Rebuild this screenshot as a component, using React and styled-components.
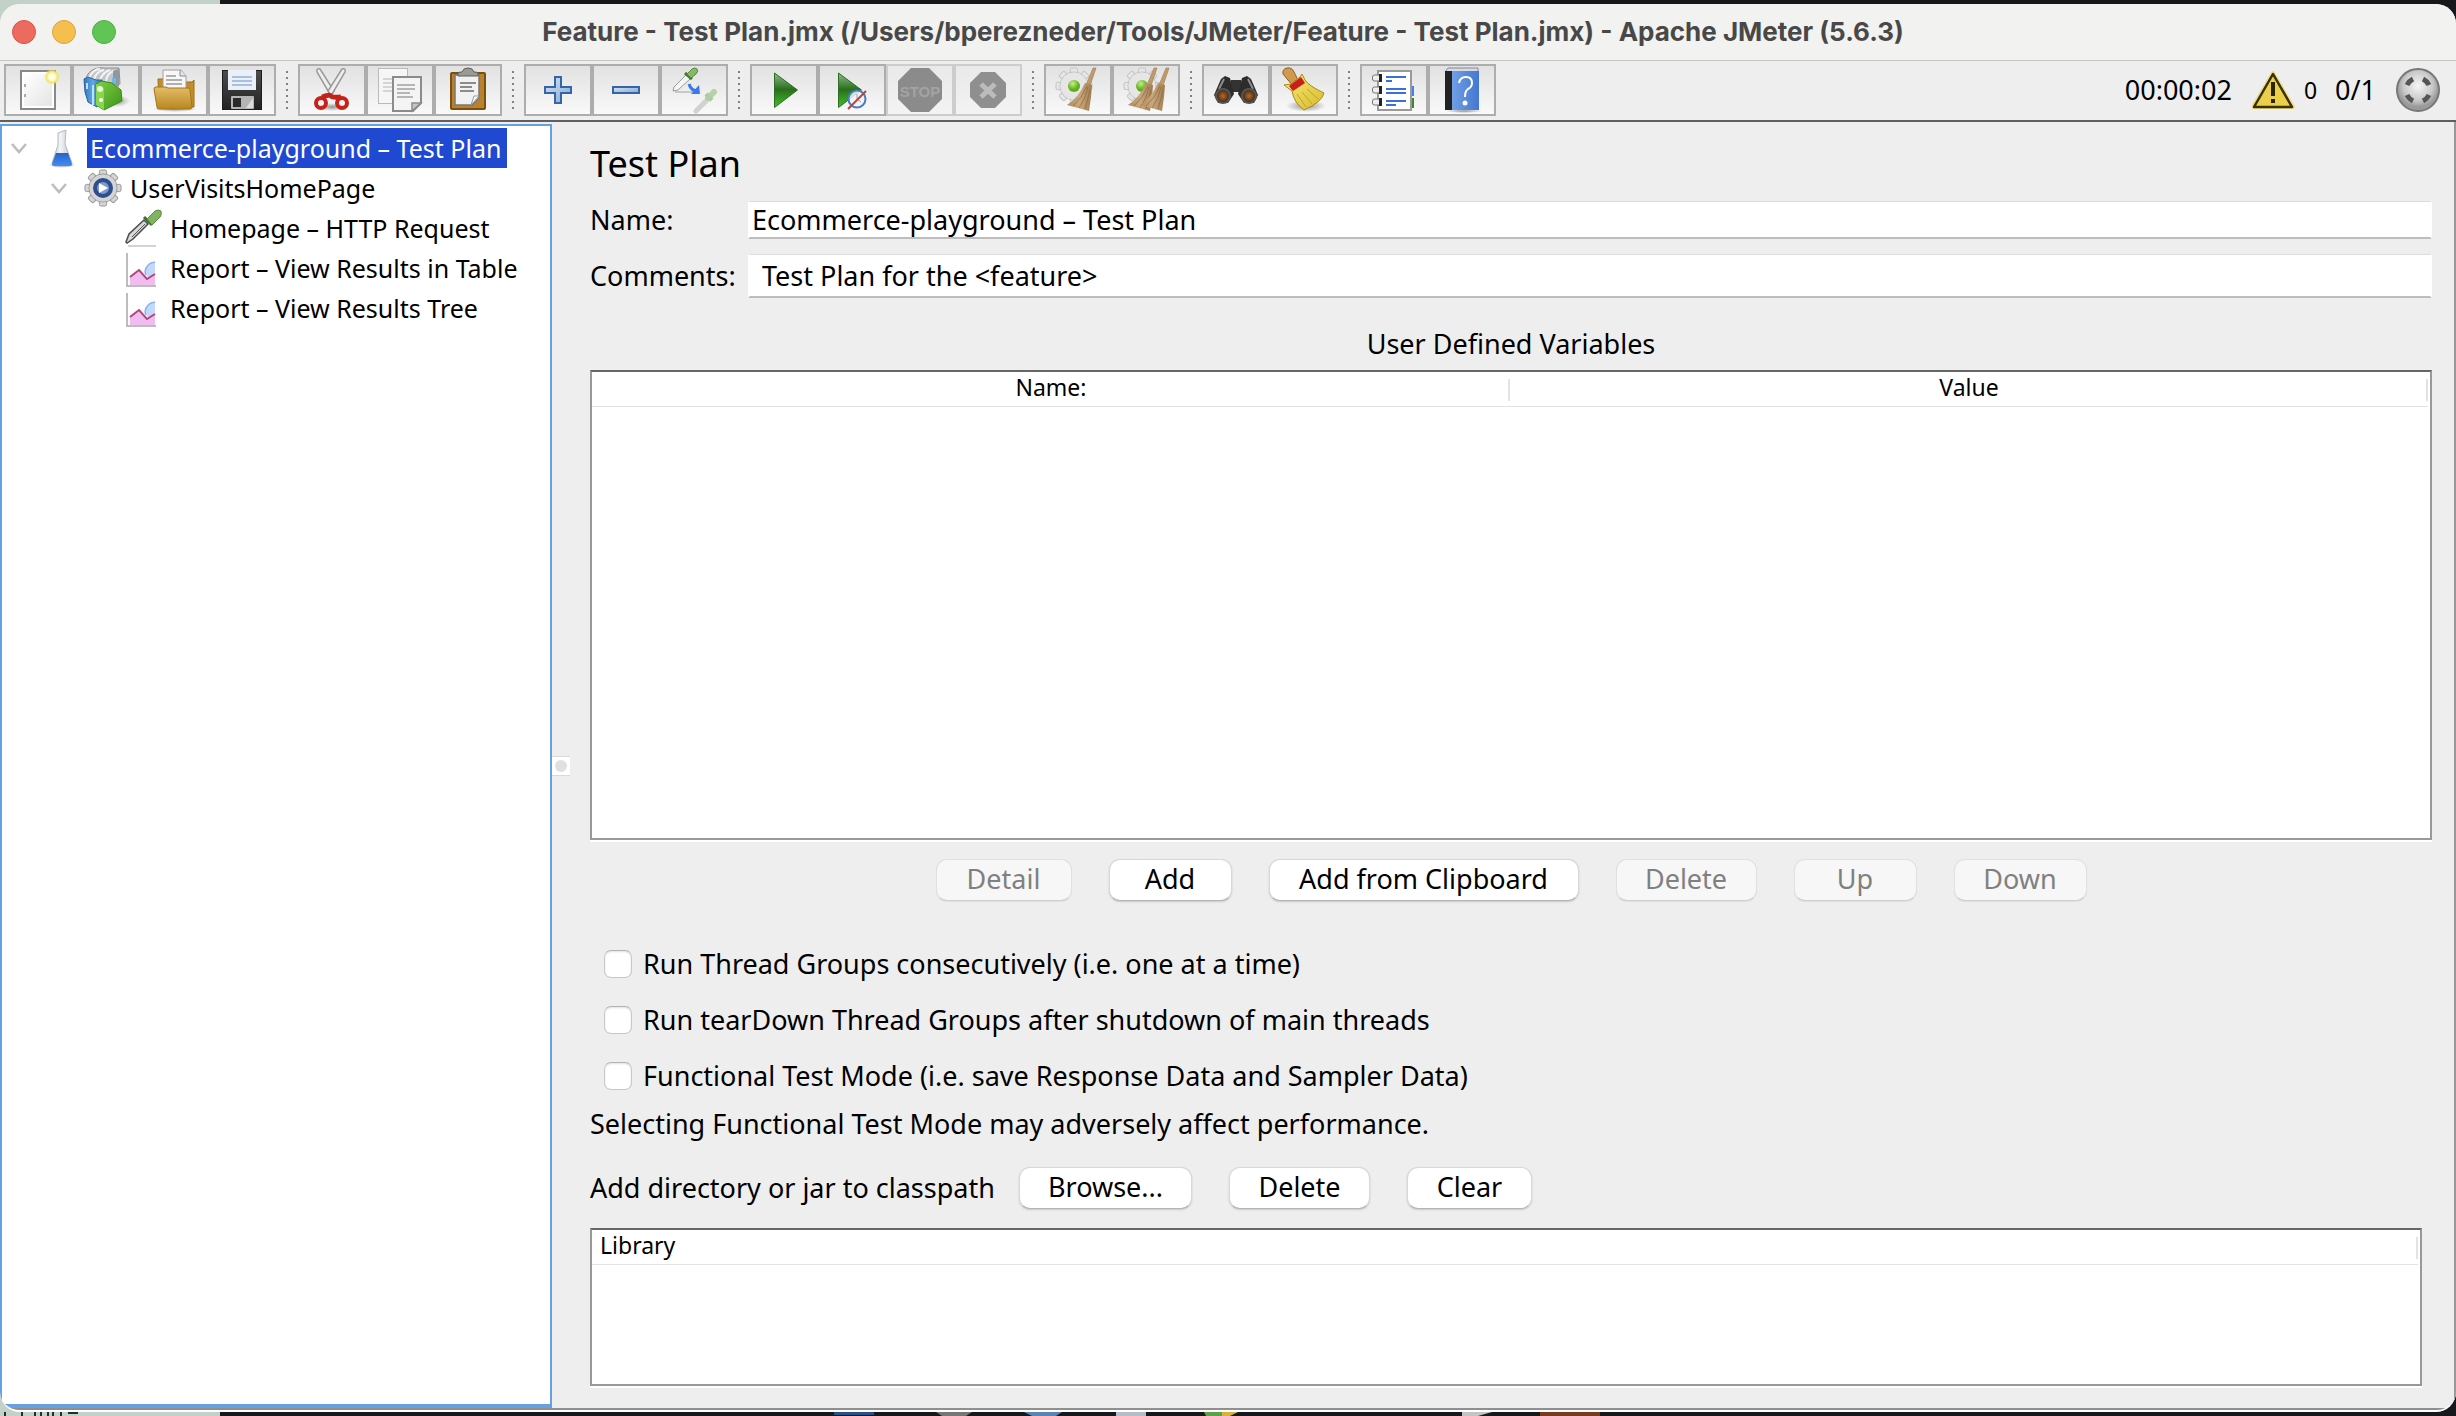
import React, { useState } from "react";
import styled, { createGlobalStyle, css } from "styled-components";

const UI_FONT = `"Noto Sans", "Open Sans", sans-serif`;

const GlobalStyle = createGlobalStyle`
  *, *::before, *::after { box-sizing: border-box; }
  body {
    margin: 0;
    color: #000;
    font: 27px/40px ${UI_FONT};
  }
  button, input { font: inherit; color: inherit; }
`;

/* ---------- desktop and window ---------- */

const Desktop = styled.div`
  display: flex;
  flex-direction: column;
  min-height: 100vh;
  padding-top: 4px;
  background: linear-gradient(90deg, #c3d2c8 220px, #17181b 220px);
`;

const DockStrip = styled.svg`
  display: block;
  width: 100%;
  height: 4px;
`;

const Window = styled.div`
  flex: 1;
  display: flex;
  flex-direction: column;
  overflow: hidden;
  border-radius: 20px;
  border-bottom: 2px solid #fff;
  background: #eee;
`;

const TitleBar = styled.header`
  display: grid;
  grid-template-columns: 140px 1fr 150px;
  align-items: center;
  height: 57px;
  padding: 0 12px;
  border-bottom: 1px solid #c4c4c4;
  background: #f2f2f0;
`;

const Lights = styled.div`
  display: flex;
  gap: 16px;
`;

const Light = styled.button`
  width: 24px;
  height: 24px;
  padding: 0;
  border: 1px solid ${(p) => p.$edge};
  border-radius: 50%;
  background: ${(p) => p.$fill};
`;

const Title = styled.h1`
  margin: 0;
  color: #484848;
  font: 700 26px/32px Inter, "Liberation Sans", sans-serif;
  text-align: center;
`;

/* ---------- toolbar ---------- */

const Toolbar = styled.div`
  display: flex;
  align-items: center;
  padding: 3px 16px 4px 4px;
  border-bottom: 2px solid #5f5f5f;
`;

const ToolGroup = styled.div`
  display: flex;
`;

const ToolButton = styled.button`
  display: block;
  width: 68px;
  height: 52px;
  padding: 0;
  border: 2px solid #adadad;
  background: linear-gradient(#e1e1e1, #f9f9f9);
  &:disabled {
    border-color: #cdcdcd;
    background: linear-gradient(#e9e9e9, #f3f3f3);
  }
  svg { display: block; width: 64px; height: 48px; }
`;

const Grip = styled.div`
  width: 2px;
  height: 38px;
  margin: 0 10px;
  background: repeating-linear-gradient(#808080 0 2px, transparent 2px 6px);
`;

const Status = styled.div`
  display: flex;
  align-items: center;
  margin-left: auto;
  svg { display: block; width: 44px; height: 44px; }
`;

const StatusText = styled.span`
  margin-left: ${(p) => (p.$small ? 8 : 0)}px;
  margin-right: ${(p) => (p.$small ? 18 : 20)}px;
  font-size: ${(p) => (p.$small ? 23 : 27)}px;
`;

/* ---------- body ---------- */

const Body = styled.div`
  flex: 1;
  display: grid;
  grid-template-columns: 552px 38px 1fr;
  padding-top: 2px;
  border-right: 2px solid #989898;
  border-bottom: 2px solid #8f8f8f;
`;

const TreePane = styled.nav`
  padding-top: 2px;
  border: 2px solid #68a1e1;
  border-bottom-width: 4px;
  background: #fff;
`;

const TreeList = styled.ul`
  margin: 0;
  padding: 0;
  list-style: none;
  font-size: 25px;
`;

const TreeRow = styled.li`
  display: flex;
  align-items: center;
  height: 40px;
  padding-left: ${(p) => p.$level * 40}px;
  svg { display: block; }
`;

const ToggleSlot = styled.span`
  width: 42px;
  padding-left: 8px;
`;

const TreeIcon = styled.span`
  width: 43px;
`;

const TreeLabel = styled.span`
  padding: 0 6px 0 3px;
  white-space: nowrap;
  ${(p) =>
    p.$selected &&
    css`
      color: #fff;
      background: #2049d2;
    `}
`;

const Splitter = styled.div`
  display: flex;
  align-items: center;
`;

const SplitHandle = styled.span`
  display: grid;
  place-items: center;
  width: 18px;
  height: 20px;
  border: 1px solid #d9d9d9;
  border-width: 1px 0;
  background: #fff;
  &::after {
    content: "";
    width: 12px;
    height: 12px;
    border-radius: 50%;
    background: #e0e0e0;
  }
`;

const Editor = styled.main`
  display: flex;
  flex-direction: column;
  padding: 16px 22px 20px 0;
`;

const Heading = styled.h2`
  margin: 0 0 12px;
  font-size: 36px;
  font-weight: 400;
  line-height: 48px;
`;

const Form = styled.div`
  display: grid;
  grid-template-columns: 158px 1fr;
  row-gap: 14px;
  align-items: center;
`;

const TextField = styled.input`
  width: 100%;
  height: ${(p) => (p.$roomy ? 44 : 38)}px;
  padding: 0 ${(p) => (p.$roomy ? 12 : 2)}px;
  border: 2px solid #fff;
  border-top: 1px solid #dcdcdc;
  border-bottom: 2px solid #bdbdbd;
  border-radius: 0;
  outline: 0;
  background: #fff;
`;

const TableCaption = styled.h3`
  margin: 26px 0 6px;
  font-size: 27px;
  font-weight: 400;
  text-align: center;
`;

const TableFrame = styled.div`
  height: ${(p) => p.$height}px;
  margin-right: ${(p) => p.$inset || 0}px;
  padding-right: 2px;
  border: 2px solid #999;
  border-top-color: #666;
  background: #fff;
  box-shadow: 0 2px #fff;
`;

const Table = styled.table`
  width: 100%;
  table-layout: fixed;
  border-collapse: collapse;
  th {
    height: 34px;
    padding: 0 8px 3px;
    border-bottom: 1px solid #e3e3e3;
    font-size: 23px;
    font-weight: 400;
    line-height: 30px;
    text-align: ${(p) => p.$align};
    background: linear-gradient(#e3e3e3, #e3e3e3) right 7px / 2px 22px no-repeat;
  }
  th:first-child { width: calc(50% + 2px); }
`;

const ButtonRow = styled.div`
  display: flex;
  justify-content: center;
  gap: 37px;
  margin-top: 19px;
`;

const PushButton = styled.button`
  min-width: ${(p) => p.$width}px;
  height: 42px;
  padding: 0 12px 2px;
  border: 1px solid #d8d8d8;
  border-bottom-color: #b4b4b4;
  border-radius: 11px;
  background: #fff;
  box-shadow: 0 1px 2px rgba(0, 0, 0, 0.16);
  line-height: 36px;
  white-space: nowrap;
  &:disabled {
    color: #808080;
    border-color: #e0e0e0;
    border-bottom-color: #cfcfcf;
    background: #f7f7f7;
    box-shadow: 0 1px 1px rgba(0, 0, 0, 0.06);
  }
`;

const Options = styled.div`
  display: grid;
  gap: 16px;
  margin-top: 43px;
  padding-left: 14px;
`;

const Option = styled.label`
  display: flex;
  align-items: center;
  gap: 11px;
`;

const Tick = styled.input`
  appearance: none;
  width: 28px;
  height: 28px;
  margin: 0;
  border: 1px solid #c8c8c8;
  border-top-color: #b4b4b4;
  border-radius: 7px;
  background: #fff;
  box-shadow: inset 0 1px 2px rgba(0, 0, 0, 0.12);
  &:checked { background: #2f7bf6; }
`;

const Note = styled.p`
  margin: 8px 0 0;
`;

const ClassPath = styled.div`
  display: flex;
  align-items: center;
  gap: 37px;
  margin: 23px 0 19px;
`;

const ClassPathLabel = styled.span`
  width: 392px;
  white-space: nowrap;
`;

/* ---------- icons ---------- */

const Svg = ({ children, w = 64, h = 48, ...rest }) => (
  <svg viewBox={`0 0 ${w} ${h}`} width={w} height={h} aria-hidden="true" {...rest}>
    {children}
  </svg>
);

const GradientSheet = styled.svg`
  position: absolute;
  width: 0;
  height: 0;
`;

const Gradients = () => (
  <GradientSheet aria-hidden="true">
    <defs>
      <linearGradient id="gold" x2="0" y2="1"><stop stopColor="#e3bd6a" /><stop offset="1" stopColor="#b98720" /></linearGradient>
      <linearGradient id="blue" x2="1" y2="0"><stop stopColor="#2f78c4" /><stop offset=".5" stopColor="#63a8e0" /><stop offset="1" stopColor="#2d6fb0" /></linearGradient>
      <linearGradient id="green" x2="1" y2="1"><stop stopColor="#7fd04a" /><stop offset="1" stopColor="#3e9416" /></linearGradient>
      <linearGradient id="play" x2="0" y2="1"><stop stopColor="#8cba88" /><stop offset=".48" stopColor="#2a6e1e" /><stop offset="1" stopColor="#3fc426" /></linearGradient>
      <linearGradient id="paper" x2="1" y2="1"><stop stopColor="#fff" /><stop offset="1" stopColor="#dedede" /></linearGradient>
      <linearGradient id="dark" x2="0" y2="1"><stop stopColor="#4c4c4c" /><stop offset="1" stopColor="#222" /></linearGradient>
      <linearGradient id="plusFill" x2="1" y2="1"><stop stopColor="#d5e2f2" /><stop offset="1" stopColor="#84a9d8" /></linearGradient>
      <linearGradient id="straw" x2="1" y2="0"><stop stopColor="#b18a5c" /><stop offset=".5" stopColor="#c9a77c" /><stop offset="1" stopColor="#a27c50" /></linearGradient>
      <linearGradient id="yellow" x2="1" y2="1"><stop stopColor="#f8ec78" /><stop offset="1" stopColor="#d8b92c" /></linearGradient>
      <linearGradient id="cover" x2="1" y2="0"><stop stopColor="#6f9fe6" /><stop offset="1" stopColor="#4478cf" /></linearGradient>
      <radialGradient id="glow"><stop stopColor="#fff" /><stop offset=".4" stopColor="#fffbd0" /><stop offset=".7" stopColor="#f2e56b" /><stop offset="1" stopColor="#f2e56b" stopOpacity="0" /></radialGradient>
      <radialGradient id="shadow"><stop stopColor="#000" stopOpacity=".4" /><stop offset="1" stopColor="#000" stopOpacity="0" /></radialGradient>
      <radialGradient id="lens"><stop stopColor="#b06a30" /><stop offset="1" stopColor="#3f220f" /></radialGradient>
      <radialGradient id="dot" cx=".4" cy=".3"><stop stopColor="#c6f08a" /><stop offset="1" stopColor="#5fae1a" /></radialGradient>
      <radialGradient id="ball" cx=".5" cy=".4"><stop stopColor="#f6f6f6" /><stop offset=".7" stopColor="#c8c8c8" /><stop offset="1" stopColor="#9a9a9a" /></radialGradient>
      <linearGradient id="liquid" x2="0" y2="1"><stop stopColor="#2b62c4" /><stop offset="1" stopColor="#3f8df5" /></linearGradient>
      <linearGradient id="glass" x2="1" y2="0"><stop stopColor="#b4bac2" /><stop offset=".4" stopColor="#f4f6f8" /><stop offset="1" stopColor="#b9bfc7" /></linearGradient>
    </defs>
  </GradientSheet>
);

const NewIcon = () => (
  <Svg>
    <rect x="15" y="5" width="34" height="38" fill="#fff" stroke="#888a85" strokeWidth="2" />
    <rect x="18" y="8" width="28" height="32" fill="url(#paper)" opacity=".8" />
    <path d="M19 18v3M19 28v3" stroke="#aaa" strokeWidth="2" />
    <circle cx="46" cy="11" r="8" fill="url(#glow)" />
  </Svg>
);

const TemplatesIcon = () => (
  <Svg>
    <ellipse cx="42" cy="35" rx="14" ry="6" fill="url(#shadow)" />
    <path d="M12 12C15 3 24 1 30 2h15l1 16-32 4z" fill="#c3c6ca" stroke="#8b9096" />
    <path d="M15 12q4-9 11-9M20 13q3-8 10-9M26 14q3-8 10-10M32 15q1-8 8-10" stroke="#f4f4f4" strokeWidth="2" fill="none" />
    <path d="M39 5l6-2v18l-6-3z" fill="#90989f" />
    <path d="M38 12h4v6h-4z" fill="#6fb8e8" />
    <path d="M10 13l4-2 8 3h6v10l-5 17-9-5-3-10z" fill="url(#blue)" stroke="#27639f" />
    <path d="M13 17v6M19 19v20" stroke="#bfe0fa" strokeWidth="2" />
    <path d="M22 18l5-3 11 2 9 7 1 11-18 9-8-5z" fill="url(#green)" stroke="#3a8a18" />
    <path d="M22 18l8 4v22l-8-5z" fill="#86d74c" />
    <circle cx="26" cy="23" r="3" fill="#e9fbd2" />
    <circle cx="27" cy="34" r="2" fill="#fff" />
  </Svg>
);

const OpenIcon = () => (
  <Svg>
    <ellipse cx="33" cy="43" rx="22" ry="3" fill="url(#shadow)" />
    <path d="M16 13h8l2 3h24l2-2v27H17z" fill="#c48d25" stroke="#9b6d17" />
    <path d="M21 4h18l5 6v14H21z" fill="#f7f7f7" stroke="#a0a0a0" />
    <path d="M38 4v6h6" fill="#dfe8e8" stroke="#889" />
    <path d="M24 10h10M24 14h16M24 18h16" stroke="#b0b0b0" strokeWidth="2" />
    <path d="M12 23q0-2 2-2h10l2 1h20q2 0 2 2l2 17q0 2-2 2H17q-2 0-2-2z" fill="url(#gold)" stroke="#a3741b" />
  </Svg>
);

const SaveIcon = () => (
  <Svg>
    <rect x="12.5" y="4.5" width="39" height="39" fill="url(#dark)" stroke="#1d1d1d" />
    <rect x="18" y="4" width="28" height="20" fill="#e9f0f8" />
    <path d="M22 11h20M22 15h20M22 19h20" stroke="#a9bfdc" strokeWidth="2" />
    <rect x="21" y="30" width="23" height="13" rx="1" fill="#b4b4b4" />
    <rect x="23" y="32" width="8" height="9" fill="#2a2a2a" />
    <path d="M36 42l7-10v10z" fill="#dcdcdc" />
  </Svg>
);

const CutIcon = () => (
  <Svg>
    <ellipse cx="32" cy="41" rx="14" ry="4" fill="url(#shadow)" />
    <path d="M17 6q-1-4 3-3l14 22-3 5z" fill="#eee" stroke="#999" strokeWidth="1.5" />
    <path d="M45 6q1-4-3-3L28 25l3 5z" fill="#eee" stroke="#999" strokeWidth="1.5" />
    <g fill="none" stroke="#c4231c" strokeWidth="4">
      <ellipse cx="21" cy="37" rx="5" ry="5" /><ellipse cx="42" cy="37" rx="5" ry="5" />
      <path d="M22 31q8-3 9-1t10 1" strokeWidth="5" />
    </g>
  </Svg>
);

const CopyIcon = () => (
  <Svg>
    <rect x="10.5" y="2.5" width="29" height="35" fill="#f6f6f6" stroke="#b9b9b9" />
    <path d="M15 13h16M15 17h10M15 21h10M15 25h10" stroke="#d5d5d5" strokeWidth="2" />
    <path d="M25 11h28v26l-8 8H25z" fill="#f4f4f4" stroke="#8b8b8b" strokeWidth="2" />
    <path d="M29 19h18M29 23h18M29 27h13M29 31h16" stroke="#b5b5b5" strokeWidth="2" />
    <path d="M53 37h-9v8z" fill="#c6c6c6" stroke="#8b8b8b" strokeWidth="1.5" />
  </Svg>
);

const PasteIcon = () => (
  <Svg>
    <rect x="15" y="7" width="34" height="36" rx="1" fill="#b9822f" stroke="#7a4f10" strokeWidth="2" />
    <path d="M19 9h24v23l-7 7H19z" fill="#f1f1f1" stroke="#777" strokeWidth="1.5" />
    <path d="M24 17h16M24 21h12M24 25h14" stroke="#8b8b8b" strokeWidth="2" />
    <path d="M43 30h-5l-3 9z" fill="#fff" stroke="#999" />
    <path d="M22 10V7q0-1 4-1 1-4 6-4t6 4q4 0 4 1v3z" fill="#9a9c94" stroke="#5d5e59" />
  </Svg>
);

const PlusIcon = () => (
  <Svg>
    <path d="M29 11h6v10h10v6H35v10h-6V27H19v-6h10z" fill="url(#plusFill)" stroke="#3465a4" strokeWidth="2" />
  </Svg>
);

const MinusIcon = () => (
  <Svg>
    <rect x="19" y="21" width="26" height="6" fill="url(#plusFill)" stroke="#3465a4" strokeWidth="2" />
  </Svg>
);

const Dropper = () => (
  <g>
    <path d="M11 25l1-4L24 9l4 4-12 11z" fill="#f6f6f6" stroke="#9a9a9a" />
    <path d="M23 7l7 6" stroke="#467a30" strokeWidth="3" />
    <path d="M25 8l5-5q3-2 5 0t-1 5l-5 4z" fill="#86b96a" stroke="#568a3c" />
  </g>
);

const ToggleIcon = () => (
  <Svg>
    <path d="M13 26h18" stroke="#bbb" strokeWidth="1.5" />
    <Dropper />
    <path d="M27 18q2 7 9 7" fill="none" stroke="#3a78ee" strokeWidth="3" />
    <path d="M37 19l1 9-9 0z" fill="#3a78ee" />
    <path d="M34 45L46 33" stroke="#d2d2d2" strokeWidth="5" strokeLinecap="round" />
    <path d="M44 28l6 6" stroke="#9dba8f" strokeWidth="4" opacity=".8" />
    <path d="M46 32l6-6" stroke="#b0cf9f" strokeWidth="6" strokeLinecap="round" opacity=".9" />
  </Svg>
);

const PlayIcon = () => (
  <Svg><path d="M22.5 7l23 17-23 17.500z" fill="url(#play)" stroke="#2c6e22" /></Svg>
);

const PlayNoTimersIcon = () => (
  <Svg>
    <path d="M18.5 7l23 17-23 17.500z" fill="url(#play)" stroke="#2c6e22" />
    <circle cx="37" cy="33" r="8.5" fill="#eef3fa" fillOpacity=".85" stroke="#4a7dbd" strokeWidth="2" />
    <path d="M37 28v5l4 3" stroke="#9aa" fill="none" />
    <path d="M28 43L46 25" stroke="#d0392f" strokeWidth="2" />
  </Svg>
);

const StopIcon = () => (
  <Svg>
    <path d="M23 2h18l13 13v18L41 46H23L10 33V15z" fill="#8b8b8b" />
    <text x="32" y="31" textAnchor="middle" fontSize="15" fontWeight="700" fontFamily="Liberation Sans, sans-serif" fill="#a3a3a3">STOP</text>
  </Svg>
);

const ShutdownIcon = () => (
  <Svg>
    <path d="M25 6h14l11 11v14L39 42H25L14 31V17z" fill="#8f8f8f" />
    <path d="M25 18l14 13M39 18L25 31" stroke="#bcbcbc" strokeWidth="5" />
  </Svg>
);

const Cog = ({ cx, cy, r, fill = "#e6e6e6", stroke = "#c4c4c4" }) => (
  <g transform={`translate(${cx} ${cy})`} fill={fill} stroke={stroke}>
    {[0, 45, 90, 135].map((a) => (
      <rect key={a} x={-r * 0.2} y={-r} width={r * 0.4} height={r * 2} rx="1.5" transform={`rotate(${a})`} />
    ))}
    <circle r={r * 0.78} />
    <circle r={r * 0.74} stroke="none" />
  </g>
);

const Whisk = () => (
  <g>
    <path d="M47 2l3 0-6 18-4-1z" fill="#c09a6d" stroke="#a07c50" strokeWidth=".6" />
    <path d="M39 17l7 2-1 12-2 14-22-6q12-8 18-22z" fill="url(#straw)" />
    <path d="M27 40q9-8 14-20M33 42q7-10 9-21M39 43q3-10 5-20" stroke="#8a6a44" fill="none" strokeWidth=".7" />
  </g>
);

const ClearIcon = () => (
  <Svg>
    <Cog cx={28} cy={20} r={18} />
    <circle cx="28" cy="20" r="6" fill="url(#dot)" />
    <Whisk />
  </Svg>
);

const ClearAllIcon = () => (
  <Svg>
    <Cog cx={28} cy={20} r={18} />
    <circle cx="28" cy="20" r="6" fill="url(#dot)" />
    <g transform="translate(-7 0)"><Whisk /></g>
    <g transform="translate(5 0)"><Whisk /></g>
  </Svg>
);

const SearchIcon = () => (
  <Svg>
    <path d="M27 14h10v12H27z" fill="#333" />
    <path d="M17 13l4-3 5 2 4 16-6 9H14l-4-8z" fill="#2c2c2c" />
    <path d="M47 13l-4-3-5 2-4 16 6 9h10l4-8z" fill="#2c2c2c" />
    <path d="M20 13l-5 10M44 13l5 10" stroke="#8c8c8c" strokeWidth="2" />
    <circle cx="19" cy="30" r="7" fill="url(#lens)" stroke="#555" strokeWidth="2" />
    <circle cx="45" cy="30" r="7" fill="url(#lens)" stroke="#555" strokeWidth="2" />
  </Svg>
);

const BroomIcon = () => (
  <Svg>
    <ellipse cx="34" cy="40" rx="20" ry="6" fill="url(#shadow)" />
    <path d="M11 8q-1-5 4-6 5-1 7 4l5 10-6 4z" fill="#cf9a4e" stroke="#8f6220" />
    <path d="M12 19l7-1 9-7 2-3 3 6q4 6 19 13-2 9-20 17Q22 37 20 25z" fill="url(#yellow)" stroke="#a58a1a" />
    <path d="M17 20l12-9 4 6-12 8z" fill="#c9201c" />
    <path d="M25 28l9 13M30 26l10 12M35 23l11 10" stroke="#c4a526" />
  </Svg>
);

const ListIcon = () => (
  <Svg>
    <path d="M49 20h3v10h-3z" fill="#4a7fe8" />
    <path d="M49 32h3v10h-3z" fill="#3c8a1c" />
    <rect x="16" y="5" width="33" height="39" fill="#fff" stroke="#9a9a9a" strokeWidth="2" />
    <path d="M24 11h20M24 23h20M24 27h20M24 35h20" stroke="#3b6fe0" strokeWidth="2" />
    <path d="M24 15h6M24 39h10" stroke="#3b6fe0" strokeWidth="2" />
    {[8, 20, 32].map((y) => (
      <g key={y}>
        <rect x="10.5" y={y + 1} width="9" height="6" rx="2" fill="#eee" stroke="#777" />
        <rect x="17" y={y} width="3" height="8" fill="#222" />
      </g>
    ))}
  </Svg>
);

const HelpIcon = () => (
  <Svg>
    <ellipse cx="34" cy="45" rx="18" ry="2" fill="url(#shadow)" />
    <path d="M18 2h30v4H15z" fill="#d8dce2" stroke="#7d8aa0" />
    <rect x="15" y="5" width="8" height="39" fill="#222" />
    <rect x="22" y="5" width="27" height="39" fill="url(#cover)" />
    <path d="M29 17q1-6 7-6t6 6q0 4-4 6-3 2-3 8" fill="none" stroke="#fff" strokeWidth="2" />
    <circle cx="35" cy="37" r="2.5" fill="#fff" />
  </Svg>
);

const WarningIcon = () => (
  <Svg w={44} h={44}>
    <path d="M21 5L41 39H1z" fill="#f0d24a" stroke="#efdc86" strokeWidth="4" strokeLinejoin="round" />
    <path d="M21 6L40 39H2z" fill="#eccf48" stroke="#3b300c" strokeWidth="2.5" strokeLinejoin="round" />
    <path d="M21 14v14M21 31v4" stroke="#2a240d" strokeWidth="4" />
  </Svg>
);

const RemoteIcon = () => (
  <Svg w={44} h={44}>
    <circle cx="22" cy="22" r="21" fill="url(#ball)" stroke="#777" strokeWidth="2" />
    <path d="M11 17q2-4 6-6M33 17q-2-4-6-6M11 27q2 4 6 6M33 27q-2 4-6 6" fill="none" stroke="#555" strokeWidth="5" />
  </Svg>
);

const Chevron = () => (
  <Svg w={18} h={12}><path d="M2 2l7 8 7-8" fill="none" stroke="#bdbdbd" strokeWidth="2.5" /></Svg>
);

const FlaskIcon = () => (
  <Svg w={38} h={40}>
    <ellipse cx="18" cy="37" rx="14" ry="3" fill="url(#shadow)" />
    <path d="M14 5l8-3-1 14 7 19q0 3-3 3H11q-3 0-3-3l6-18z" fill="url(#glass)" stroke="#b4bac2" />
    <path d="M12 25h12l4 11q0 2-3 2H11q-3 0-3-2z" fill="url(#liquid)" />
  </Svg>
);

const ThreadGroupIcon = () => (
  <Svg w={38} h={40}>
    <Cog cx={19} cy={20} r={18} fill="#d5d5d5" stroke="#999" />
    <circle cx="19" cy="20" r="8" fill="#7f9bcd" stroke="#2f4e8e" strokeWidth="4" />
    <path d="M15 15l9 5-9 5z" fill="#fff" />
  </Svg>
);

const SamplerIcon = () => (
  <Svg w={38} h={40}>
    <path d="M4 38h28" stroke="#c4c4c4" strokeWidth="1.5" />
    <path d="M2 34l3-8L20 12l4 4L9 31l-6 4z" fill="#d8d8d8" stroke="#4b4b4b" strokeWidth="1.5" />
    <path d="M8 29l13-13" stroke="#555" />
    <path d="M20 9l8 8" stroke="#3f7028" strokeWidth="3" />
    <path d="M23 11l8-8q3-2 6 0 1 4-1 6l-8 8z" fill="#7fb461" stroke="#5a8c40" />
  </Svg>
);

const ReportIcon = () => (
  <Svg w={38} h={40}>
    <path d="M3 5v33h29" fill="none" stroke="#a8a8a8" strokeWidth="1.5" />
    <path d="M31 14q-9 1-10 10l4 7 6-5z" fill="#c3d9fa" />
    <path d="M31 14q-9 1-10 10l1 3" fill="none" stroke="#8db4ee" strokeWidth="1.5" />
    <path d="M6 29l9-7 8 9 8-5v11H6z" fill="#f0bdf0" />
    <path d="M6 29l9-7 8 9 8-5" fill="none" stroke="#b5447c" strokeWidth="2" />
  </Svg>
);

/* ---------- data ---------- */

const TOOL_GROUPS = [
  [["New", NewIcon], ["Templates", TemplatesIcon], ["Open", OpenIcon], ["Save", SaveIcon]],
  [["Cut", CutIcon], ["Copy", CopyIcon], ["Paste", PasteIcon]],
  [["Expand all", PlusIcon], ["Collapse all", MinusIcon], ["Toggle", ToggleIcon]],
  [["Start", PlayIcon], ["Start no pauses", PlayNoTimersIcon], ["Stop", StopIcon, true], ["Shutdown", ShutdownIcon, true]],
  [["Clear", ClearIcon], ["Clear all", ClearAllIcon]],
  [["Search", SearchIcon], ["Reset search", BroomIcon]],
  [["Function helper", ListIcon], ["Help", HelpIcon]],
];

const TREE = [
  { level: 0, label: "Ecommerce-playground – Test Plan", Icon: FlaskIcon, open: true, selected: true },
  { level: 1, label: "UserVisitsHomePage", Icon: ThreadGroupIcon, open: true },
  { level: 2, label: "Homepage – HTTP Request", Icon: SamplerIcon },
  { level: 2, label: "Report – View Results in Table", Icon: ReportIcon },
  { level: 2, label: "Report – View Results Tree", Icon: ReportIcon },
];

const VARIABLE_ACTIONS = [
  ["Detail", 136, true],
  ["Add", 123],
  ["Add from Clipboard", 310],
  ["Delete", 141, true],
  ["Up", 123, true],
  ["Down", 133, true],
];

const PATH_ACTIONS = [["Browse...", 173], ["Delete", 141], ["Clear", 125]];

const OPTIONS = [
  "Run Thread Groups consecutively (i.e. one at a time)",
  "Run tearDown Thread Groups after shutdown of main threads",
  "Functional Test Mode (i.e. save Response Data and Sampler Data)",
];

export default function App() {
  const [name, setName] = useState("Ecommerce-playground – Test Plan");
  const [comments, setComments] = useState("Test Plan for the <feature>");

  return (
    <Desktop>
      <GlobalStyle />
      <Gradients />
      <Window>
        <TitleBar>
          <Lights>
            <Light aria-label="Close" $fill="#ed6a5f" $edge="#d9534a" />
            <Light aria-label="Minimize" $fill="#f5bf4f" $edge="#dba33b" />
            <Light aria-label="Zoom" $fill="#61c555" $edge="#4fae43" />
          </Lights>
          <Title>Feature - Test Plan.jmx (/Users/bperezneder/Tools/JMeter/Feature - Test Plan.jmx) - Apache JMeter (5.6.3)</Title>
        </TitleBar>

        <Toolbar>
          {TOOL_GROUPS.map((group, i) => (
            <React.Fragment key={i}>
              {i > 0 && <Grip />}
              <ToolGroup>
                {group.map(([label, Icon, disabled]) => (
                  <ToolButton key={label} aria-label={label} disabled={disabled}><Icon /></ToolButton>
                ))}
              </ToolGroup>
            </React.Fragment>
          ))}
          <Status>
            <StatusText>00:00:02</StatusText>
            <WarningIcon />
            <StatusText $small>0</StatusText>
            <StatusText>0/1</StatusText>
            <RemoteIcon />
          </Status>
        </Toolbar>

        <Body>
          <TreePane>
            <TreeList role="tree">
              {TREE.map(({ level, label, Icon, open, selected }) => (
                <TreeRow key={label} $level={level} role="treeitem" aria-selected={!!selected}>
                  <ToggleSlot>{open && <Chevron />}</ToggleSlot>
                  <TreeIcon><Icon /></TreeIcon>
                  <TreeLabel $selected={selected}>{label}</TreeLabel>
                </TreeRow>
              ))}
            </TreeList>
          </TreePane>
          <Splitter><SplitHandle /></Splitter>
          <Editor>
            <Heading>Test Plan</Heading>
            <Form>
              <label htmlFor="plan-name">Name:</label>
              <TextField id="plan-name" value={name} onChange={(e) => setName(e.target.value)} />
              <label htmlFor="plan-comments">Comments:</label>
              <TextField id="plan-comments" $roomy value={comments} onChange={(e) => setComments(e.target.value)} />
            </Form>

            <TableCaption>User Defined Variables</TableCaption>
            <TableFrame $height={470}>
              <Table $align="center">
                <thead><tr><th>Name:</th><th>Value</th></tr></thead>
              </Table>
            </TableFrame>

            <ButtonRow>
              {VARIABLE_ACTIONS.map(([label, width, disabled]) => (
                <PushButton key={label} $width={width} disabled={disabled}>{label}</PushButton>
              ))}
            </ButtonRow>

            <Options>
              {OPTIONS.map((text) => (
                <Option key={text}><Tick type="checkbox" />{text}</Option>
              ))}
            </Options>
            <Note>Selecting Functional Test Mode may adversely affect performance.</Note>

            <ClassPath>
              <ClassPathLabel>Add directory or jar to classpath</ClassPathLabel>
              {PATH_ACTIONS.map(([label, width]) => (
                <PushButton key={label} $width={width}>{label}</PushButton>
              ))}
            </ClassPath>
            <TableFrame $height={158} $inset={10}>
              <Table $align="left">
                <thead><tr><th>Library</th></tr></thead>
              </Table>
            </TableFrame>
          </Editor>
        </Body>
      </Window>
      <DockStrip viewBox="0 0 2456 4" preserveAspectRatio="none" aria-hidden="true">
        <path d="M4 0h2v4h-2zM21 0h2v4h-2zM34 0h2v4h-2zM40 0h2v4h-2zM47 0h2v4h-2zM52 0h2v4h-2zM60 0h2v4h-2zM68 0h10v2h-10z" fill="#1d3328" />
        <path d="M834 0h40v3h-40z" fill="#2b4f86" />
        <path d="M936 0h36l-6 4h-24z" fill="#777" />
        <path d="M1024 0h38l-6 4h-24z" fill="#5b83b5" />
        <path d="M1116 0h30v4h-30z" fill="#b4bdc8" />
        <path d="M1204 0h18v4h-16z" fill="#5da04a" />
        <path d="M1222 0h16l-8 4h-8z" fill="#d9b23c" />
        <path d="M1462 0h30l-14 4h-16z" fill="#c4c4c4" />
        <path d="M1540 0h60v4h-60z" fill="#7a3a22" />
      </DockStrip>
    </Desktop>
  );
}
